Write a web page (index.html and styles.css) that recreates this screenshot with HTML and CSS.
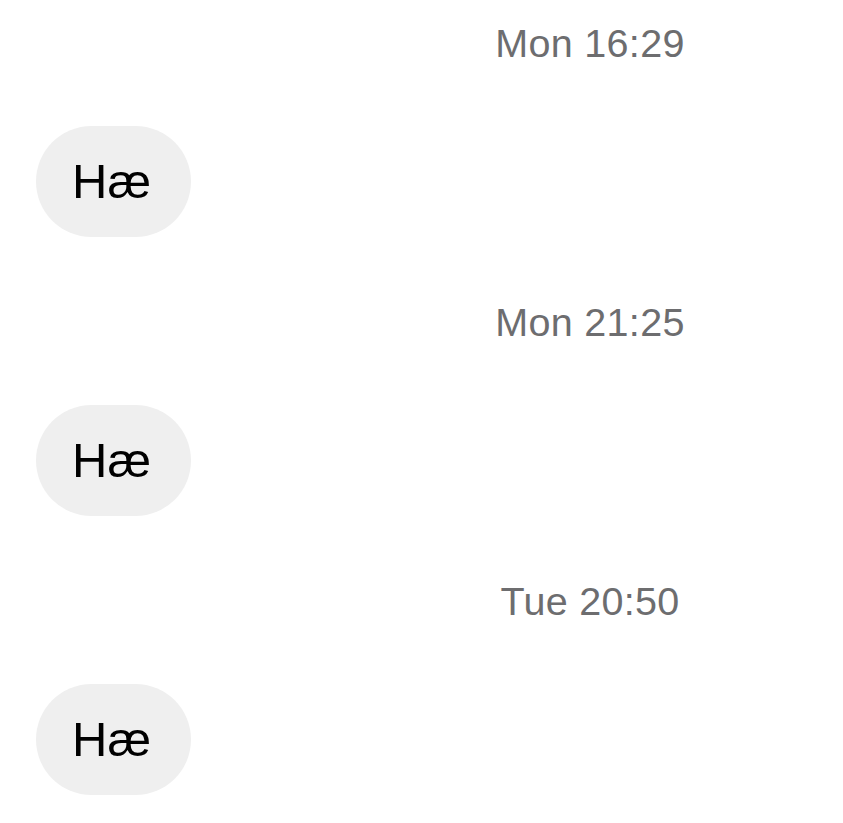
FILE: index.html
```html
<!DOCTYPE html>
<html lang="is">
<head>
  <meta charset="UTF-8" />
  <meta name="viewport" content="width=device-width, initial-scale=1.0"/>
  <title>Skilaboð</title>
  <link rel="stylesheet" href="styles.css">
</head>
<body>

<div class="thread">
  <div class="group">
    <div class="stamp">Mon 16:29</div>
    <div class="row"><div class="bubble">Hæ</div></div>
  </div>
  <div class="group">
    <div class="stamp">Mon 21:25</div>
    <div class="row"><div class="bubble">Hæ</div></div>
  </div>
  <div class="group">
    <div class="stamp">Tue 20:50</div>
    <div class="row"><div class="bubble">Hæ</div></div>
  </div>
</div>

</body>
</html>
```

FILE: styles.css
```css
body {
  margin: 0;
  background-color: #ffffff;
  font-family: "Liberation Sans", Arial, sans-serif;
}
.thread {
  padding-top: 15px;
}
.group {
  padding-bottom: 57px;
}
.stamp {
  height: 56px;
  line-height: 56px;
  padding-left: 337px;
  text-align: center;
  font-size: 39.5px;
  letter-spacing: 0.3px;
  color: #6d6d6f;
  margin-bottom: 55px;
}
.row {
  display: flex;
  padding-left: 36px;
}
.bubble {
  height: 111px;
  line-height: 111px;
  padding: 0 40px 0 36px;
  border-radius: 56px;
  background-color: #efefef;
  color: #000;
  font-size: 49px;
}
```
